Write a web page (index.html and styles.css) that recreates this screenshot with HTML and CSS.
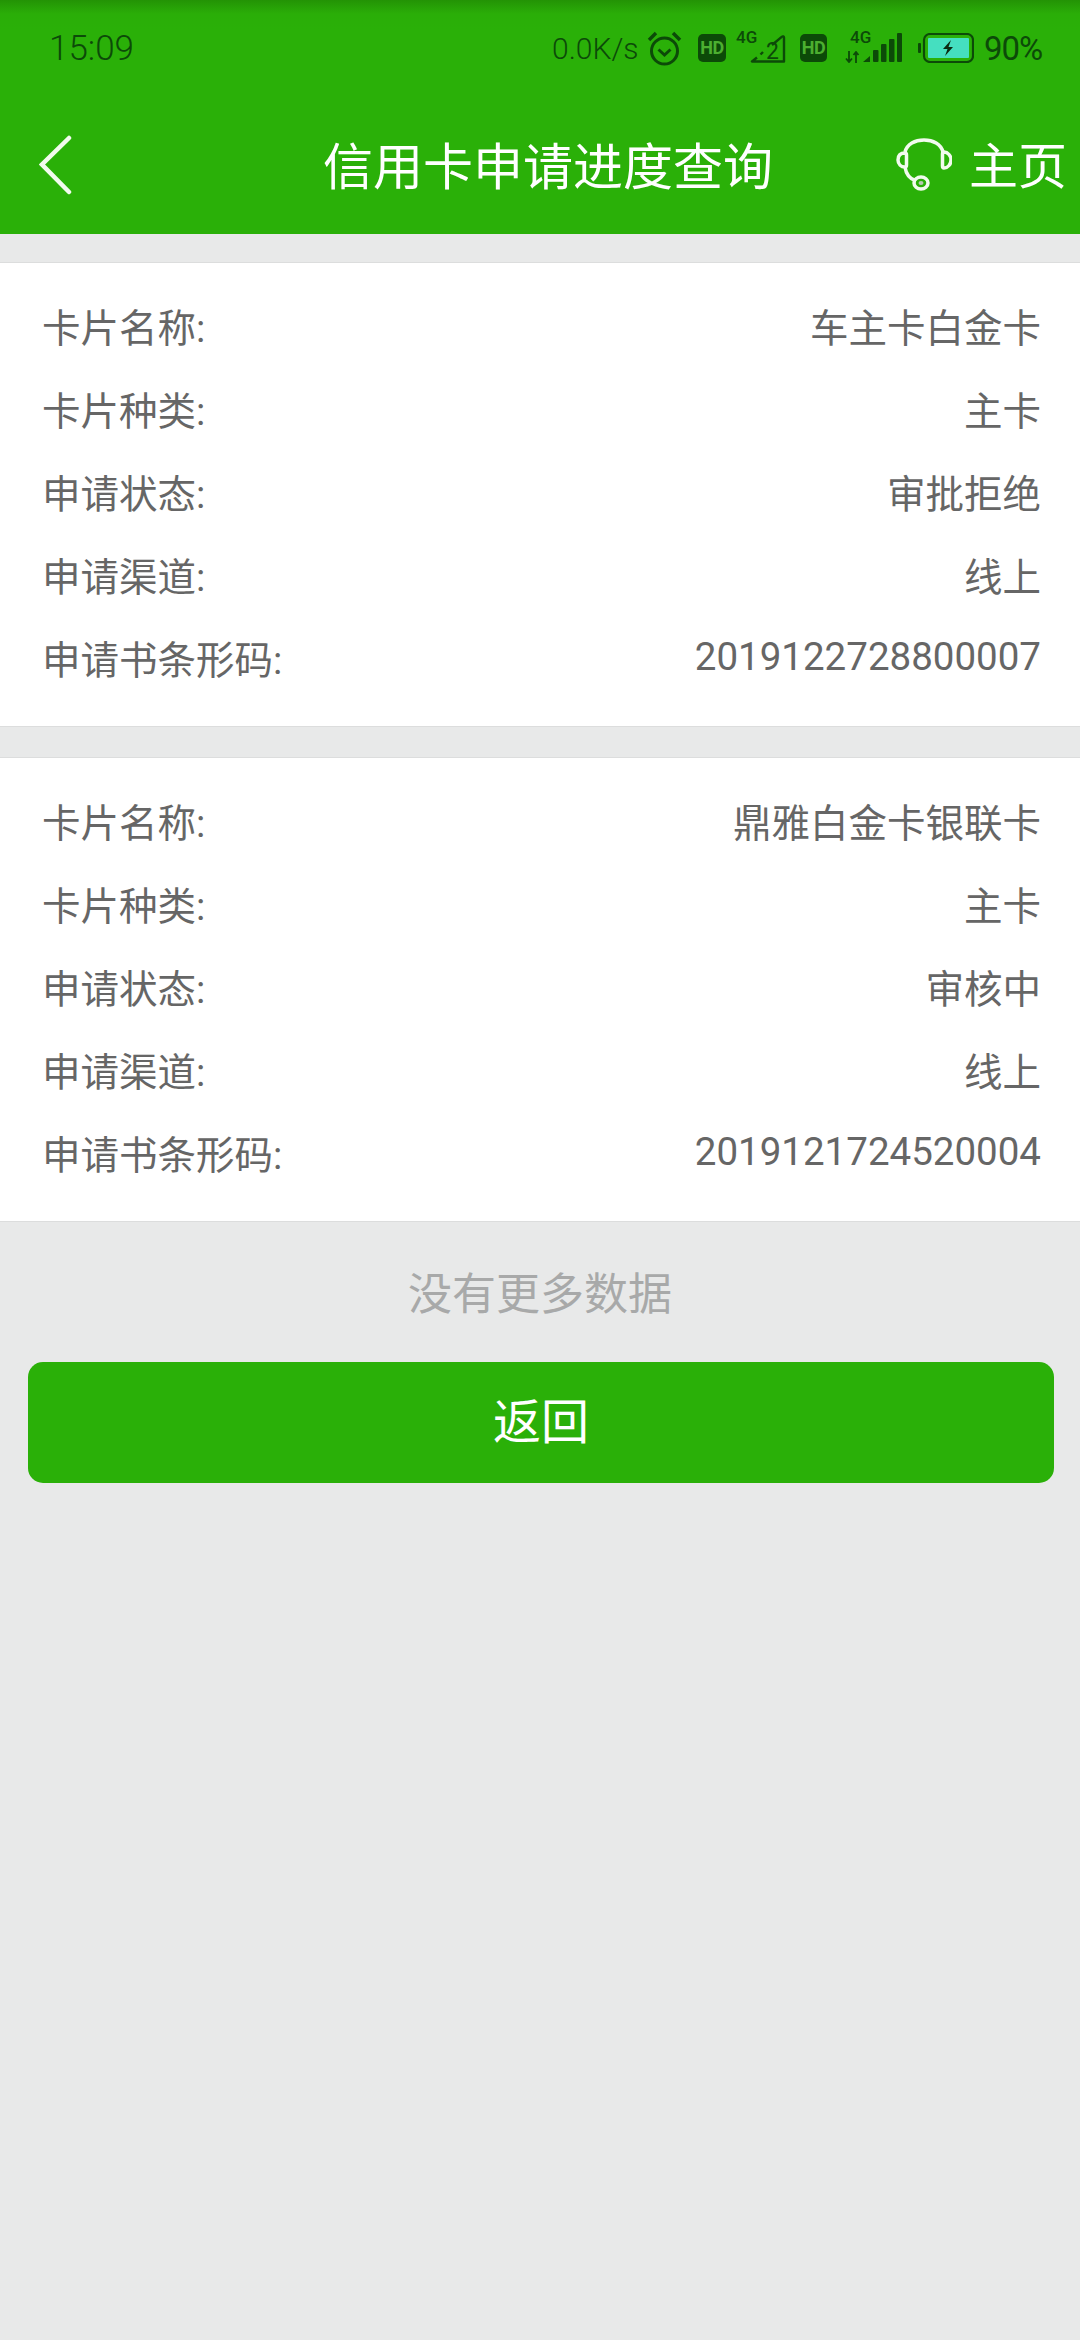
FILE: index.html
```html
<!DOCTYPE html>
<html lang="zh-CN">
<head>
<meta charset="utf-8">
<title>信用卡申请进度查询</title>
<link rel="stylesheet" href="styles.css">
</head>
<body>
<header class="top">
  <div class="status">
    <span class="time">15:09</span>
    <div class="status-right">
      <span class="speed">0.0K/s</span>
      <svg class="ic-alarm" width="35" height="35" viewBox="0 0 35 35" fill="none" stroke="#0c4a08" stroke-width="3"><circle cx="17.500" cy="20" r="13"/><path d="M11.500 18.500l6 5.500 6-5.500"/><path d="M2 9l7-7M33 9l-7-7" stroke-width="3.500"/></svg>
      <span class="hd hd-a">HD</span>
      <span class="sim">
        <span class="tiny">4G</span>
        <svg class="tri" width="37" height="30" viewBox="0 0 37 30" fill="none" stroke="#0c4a08" stroke-width="2.400"><path d="M14 27.500h21V3.500a1.200 1.200 0 0 0-2-.8L23 11M14 18l-2.500 2.500M8 23.500l-5 4h11" stroke-linejoin="round"/></svg>
        <span class="two">2</span>
      </span>
      <span class="hd hd-b">HD</span>
      <span class="sim sim-b">
        <span class="tiny">4G</span>
        <svg class="arrows" width="15" height="12" viewBox="0 0 15 12" fill="none" stroke="#0c4a08" stroke-width="1.800"><path d="M4 0v11M1 7.500L4 11l3-3.500M11 12V1M8.500 4L11 1l2.500 3"/></svg>
        <svg class="bars" width="39" height="30" viewBox="0 0 39 30" fill="#0c4a08"><path d="M0 29l7-6v6z"/><rect x="10" y="17" width="5.500" height="12" rx="1"/><rect x="18" y="11" width="5.500" height="18" rx="1"/><rect x="26" y="6" width="5.500" height="23" rx="1"/><rect x="34" y="0" width="5" height="29" rx="1"/></svg>
      </span>
      <svg class="ic-batt" width="56" height="30" viewBox="0 0 56 30"><rect x="0" y="10" width="3" height="10" rx="1" fill="#0c4a08"/><rect x="6" y="1" width="49" height="28" rx="6" fill="none" stroke="#0c4a08" stroke-width="2.200"/><rect x="10" y="5" width="41" height="20" rx="1" fill="#45dfc0"/><path d="M33 7l-8 9h4.500l-2.500 7 8-9h-4.500z" fill="#0c2a10"/></svg>
      <span class="pct">90%</span>
    </div>
  </div>
  <nav class="nav">
    <svg class="back" width="33" height="60" viewBox="0 0 33 60" fill="none" stroke="#f2fbee" stroke-width="4.500" stroke-linecap="round"><path d="M30 3L3 29.500 30 57"/></svg>
    <h1 class="title">信用卡申请进度查询</h1>
    <div class="home">
      <svg width="56" height="54" viewBox="0 0 56 54" fill="none" stroke="#f2fbee" stroke-width="3.500"><path d="M9 14C11 6 19 2 28 2s17 4 19 12"/><path d="M9 15C4 15 2 18 2 22s3 7 7 7c1.500 0 1.500-1 1.500-2V17c0-1 0-2-1.500-2z"/><path d="M48 14c4 0 7 4 7 8s-3 8-7 8c-1 0-1.500-1-1.500-2V16c0-1 .5-2 1.500-2z"/><path d="M9 29c1 7 5 12 11 14"/><ellipse cx="25" cy="45" rx="7" ry="6"/><ellipse cx="25" cy="45" rx="2.500" ry="2" fill="#b9c9b4" stroke="none"/></svg>
      <span class="home-text">主页</span>
    </div>
  </nav>
</header>
<main>
  <section class="card">
    <div class="row"><span class="label">卡片名称:</span><span class="value">车主卡白金卡</span></div>
    <div class="row"><span class="label">卡片种类:</span><span class="value">主卡</span></div>
    <div class="row"><span class="label">申请状态:</span><span class="value">审批拒绝</span></div>
    <div class="row"><span class="label">申请渠道:</span><span class="value">线上</span></div>
    <div class="row"><span class="label">申请书条形码:</span><span class="value">2019122728800007</span></div>
  </section>
  <section class="card">
    <div class="row"><span class="label">卡片名称:</span><span class="value">鼎雅白金卡银联卡</span></div>
    <div class="row"><span class="label">卡片种类:</span><span class="value">主卡</span></div>
    <div class="row"><span class="label">申请状态:</span><span class="value">审核中</span></div>
    <div class="row"><span class="label">申请渠道:</span><span class="value">线上</span></div>
    <div class="row"><span class="label">申请书条形码:</span><span class="value">2019121724520004</span></div>
  </section>
  <p class="nomore">没有更多数据</p>
  <button class="btn" type="button">返回</button>
</main>
</body>
</html>
```
FILE: styles.css
```css
* { box-sizing: border-box; }
html, body { margin: 0; padding: 0; }
body {
  width: 1080px;
  height: 2340px;
  background: #e8e9e9;
  font-family: "Noto Sans CJK SC", "Roboto", sans-serif;
  overflow: hidden;
}
.top {
  height: 234px;
  background: linear-gradient(#239305 0, #2aae08 14px, #2ab008 30px);
  color: #fff;
}
.status {
  height: 96px;
  padding: 0 0 0 49px;
  display: flex;
  align-items: center;
  justify-content: space-between;
  color: #0c4a08;
  font-family: "Roboto", sans-serif;
  font-weight: 300;
}
.time { font-size: 35px; line-height: 1; }
.status-right {
  display: flex;
  align-items: center;
  width: 528px;
}
.speed { font-size: 30px; width: 95px; white-space: nowrap; }
.ic-alarm { flex: none; }
.hd {
  flex: none;
  width: 28px;
  height: 28px;
  border-radius: 5px;
  background: #0c4a08;
  color: #4caf30;
  font-size: 18px;
  font-weight: 700;
  line-height: 28px;
  text-align: center;
  letter-spacing: -.5px;
}
.hd-a { margin-left: 16px; }
.sim { position: relative; flex: none; width: 50px; height: 32px; margin-left: 10px; }
.tiny {
  position: absolute;
  left: 0;
  top: -3px;
  font-size: 17px;
  font-weight: 500;
  line-height: 16px;
}
.tri { position: absolute; right: 0; top: 2px; }
.two {
  position: absolute;
  right: 7px;
  top: 8px;
  font-size: 23px;
  font-weight: 400;
  line-height: 24px;
}
.hd-b { margin-left: 14px; width: 27px; }
.sim-b { width: 57px; margin-left: 18px; }
.sim-b .tiny { left: 5px; }
.arrows { position: absolute; left: 0; bottom: 1px; }
.bars { position: absolute; right: 0; bottom: 1px; }
.ic-batt { flex: none; margin-left: 16px; }
.pct { font-size: 33px; margin-left: 10px; white-space: nowrap; font-weight: 400; letter-spacing: -1px; }
.nav {
  height: 138px;
  display: flex;
  align-items: center;
  padding: 0 13px 0 39px;
}
.back { flex: none; }
.title {
  margin: 0 0 0 251px;
  padding-bottom: 5px;
  font-size: 50px;
  font-weight: 400;
  line-height: 60px;
  white-space: nowrap;
}
.home {
  margin-left: auto;
  display: flex;
  align-items: center;
  gap: 17px;
}
.home-text { font-size: 49px; line-height: 60px; padding-bottom: 4px; }
.card {
  margin-top: 28px;
  padding: 21px 0 29px;
  background: #fff;
  border-top: 1px solid #dcdddd;
  border-bottom: 1px solid #dcdddd;
  height: 465px;
}
.card + .card { margin-top: 30px; }
.row {
  height: 82.800px;
  padding: 0 39px 0 42px;
  display: flex;
  align-items: center;
  justify-content: space-between;
  color: #666;
  font-family: "Roboto", "Noto Sans CJK SC", sans-serif;
  font-size: 38.500px;
  white-space: nowrap;
}
.nomore {
  margin: 0;
  padding-top: 39px;
  height: 140px;
  text-align: center;
  font-size: 44px;
  line-height: 60px;
  color: #a8a9a9;
}
.btn {
  display: block;
  width: 1026px;
  height: 121px;
  margin: 0 0 0 28px;
  padding: 0 0 10px;
  border: none;
  border-radius: 15px;
  background: #2ab008;
  color: #fff;
  font: 400 48px/60px "Noto Sans CJK SC", sans-serif;
}
```
